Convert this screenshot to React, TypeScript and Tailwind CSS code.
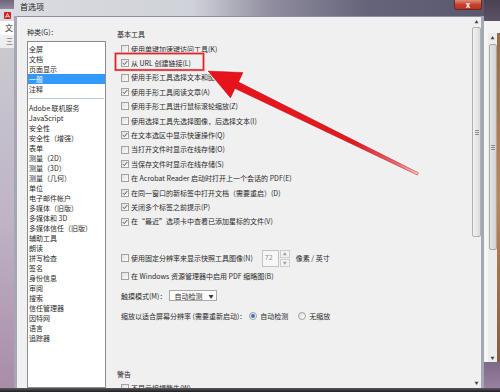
import React from "react";

interface RowProps {
  on?: boolean;
  label: string;
  className?: string;
}

const topCategories = ["全屏", "文档", "页面显示", "一般", "注释"];

const moreCategories = [
  "Adobe 联机服务",
  "JavaScript",
  "安全性",
  "安全性（增强）",
  "表单",
  "测量（2D）",
  "测量（3D）",
  "测量（几何）",
  "单位",
  "电子邮件帐户",
  "多媒体（旧版）",
  "多媒体和 3D",
  "多媒体信任（旧版）",
  "辅助工具",
  "朗读",
  "拼写检查",
  "签名",
  "身份信息",
  "审阅",
  "搜索",
  "信任管理器",
  "因特网",
  "语言",
  "追踪器",
];

const basicTools = [
  { label: "使用单键加速键访问工具(K)", on: false },
  { label: "从 URL 创建链接(L)", on: true },
  { label: "使用手形工具选择文本和图像(X)", on: false },
  { label: "使用手形工具阅读文章(A)", on: true },
  { label: "使用手形工具进行鼠标滚轮缩放(Z)", on: false },
  { label: "使用选择工具先选择图像，后选择文本(I)", on: false },
  { label: "在文本选区中显示快速操作(Q)", on: true },
  { label: "当打开文件时显示在线存储(O)", on: false },
  { label: "当保存文件时显示在线存储(S)", on: true },
  { label: "在 Acrobat Reader 启动时打开上一个会话的 PDF(E)", on: false },
  { label: "在同一窗口的新标签中打开文档（需要重启）(D)", on: true },
  { label: "关闭多个标签之前提示(P)", on: true },
  { label: "在“最近”选项卡中查看已添加星标的文件(V)", on: true },
];

const Check = ({ on }: { on?: boolean }) => (
  <span className="flex h-[8px] w-[8px] shrink-0 items-center justify-center border border-[#a2a2a2] bg-gradient-to-br from-[#e0e0e0] to-[#fbfbfb]">
    {on && (
      <svg viewBox="0 0 6 6" className="h-[6px] w-[6px]">
        <path d="M0.8 3.1 L2.3 4.6 L5.3 1" fill="none" stroke="#444" strokeWidth="0.9" />
      </svg>
    )}
  </span>
);

const CheckRow = ({ on, label, className = "" }: RowProps) => (
  <div className={`flex h-[14.42px] shrink-0 items-center gap-[2px] pl-[15px] ${className}`}>
    <Check on={on} />
    <span className="whitespace-nowrap">{label}</span>
  </div>
);

const Radio = ({ on }: { on?: boolean }) => (
  <span className="flex h-[8px] w-[8px] shrink-0 items-center justify-center rounded-full border border-[#a0a0a0] bg-gradient-to-br from-[#dcdcdc] to-white">
    {on && <span className="h-[4px] w-[4px] rounded-full bg-[#3a78c4]" />}
  </span>
);

const LeftStrip = () => (
  <div className="flex w-[14px] shrink-0 flex-col">
    <div className="h-[9px] bg-gradient-to-b from-[#6f6479] to-[#948aa0]" />
    <div className="flex h-[12px] items-center bg-[#d8dbe3] pl-[4px]">
      <svg viewBox="0 0 8 8" className="h-[7px] w-[7px]">
        <rect width="8" height="8" rx="1" fill="#d4201f" />
        <path d="M1.5 6.5 C3 4 4 2.5 4 1.5 C4 2.5 5 4 6.5 6.5 M2 5 L6 5" fill="none" stroke="#fff" strokeWidth="0.8" />
      </svg>
    </div>
    <div className="flex h-[14px] items-center overflow-hidden bg-white pl-[5px] text-[8px] text-[#333]">文</div>
    <div className="flex h-[13px] items-center justify-end bg-[#eeeeee] pr-[1px] text-[7px] text-[#555]">三</div>
    <div className="flex-1 bg-gradient-to-b from-[#cbc8cf] via-[#bfb4c6] to-[#a98ca9]" />
  </div>
);

const RightStrip = () => (
  <div className="flex w-[16px] shrink-0 flex-col">
    <div className="h-[21px] bg-gradient-to-b from-[#4a4152] to-[#5c5266]" />
    <div className="h-[12px] bg-[#f3f3f3]" />
    <div className="flex h-[329px]">
      <div className="w-[4px] bg-[#f6f6f6]" />
      <div className="flex w-[9px] flex-col items-center bg-[#ececec]">
        <div className="flex h-[9px] items-center text-[4px] leading-none text-[#444]">▲</div>
        <div className="mt-[2px] flex h-[206px] w-[8px] items-center justify-center rounded-[2px] border border-[#a8a8a8] bg-gradient-to-r from-[#e4e4e4] to-[#d2d2d2]">
          <div className="flex flex-col gap-[1px]">
            <span className="h-px w-[4px] bg-[#8a8a8a]" />
            <span className="h-px w-[4px] bg-[#8a8a8a]" />
            <span className="h-px w-[4px] bg-[#8a8a8a]" />
          </div>
        </div>
        <div className="flex-1" />
        <div className="flex h-[9px] items-center text-[4px] leading-none text-[#444]">▼</div>
      </div>
      <div className="w-[3px] bg-gradient-to-b from-[#9b6a3f] via-[#c08850] to-[#8a5a3a]" />
    </div>
    <div className="flex-1 bg-gradient-to-b from-[#7b6a86] to-[#9a7fa3]" />
  </div>
);

const CategoryList = () => (
  <div className="flex w-[89px] shrink-0 flex-col pl-[10px]">
    <div className="flex h-[13px] shrink-0 items-center whitespace-nowrap">种类(G)：</div>
    <div className="mt-[2px] flex flex-1 flex-col border border-[#8a8d95] bg-white pt-[2px]">
      {topCategories.map((c) => (
        <div
          key={c}
          className={`flex h-[10px] shrink-0 items-center whitespace-nowrap pl-[1px] ${c === "一般" ? "bg-[#3399ff] text-white" : ""}`}
        >
          {c}
        </div>
      ))}
      <div className="flex h-[9px] shrink-0 items-center px-[1px]">
        <div className="h-px w-full bg-[#b8c8d8]" />
      </div>
      {moreCategories.map((c) => (
        <div key={c} className="flex h-[10px] shrink-0 items-center whitespace-nowrap pl-[1px]">
          {c}
        </div>
      ))}
    </div>
  </div>
);

const SettingsPanel = () => (
  <div className="flex min-w-0 flex-1 flex-col overflow-hidden">
    <div className="flex h-[15.6px] shrink-0 items-center pl-[11px]">基本工具</div>
    {basicTools.map((t) => (
      <CheckRow key={t.label} on={t.on} label={t.label} />
    ))}
    <div className="h-[22px] shrink-0" />
    <div className="flex h-[14.42px] shrink-0 items-center pl-[15px]">
      <Check />
      <span className="ml-[2px] whitespace-nowrap">使用固定分辨率来显示快照工具图像(N)</span>
      <div className="ml-[9px] flex h-[17px] w-[17px] items-start border border-[#c2c2c2] bg-[#f7f7f7] pl-[2px] pt-[1px] text-[#909090]">
        72
      </div>
      <div className="ml-[1px] flex h-[17px] w-[10px] flex-col gap-px">
        <div className="flex flex-1 items-center justify-center border border-[#cccccc] bg-[#f4f4f4] text-[4px] leading-none text-[#a0a0a0]">▲</div>
        <div className="flex flex-1 items-center justify-center border border-[#cccccc] bg-[#f4f4f4] text-[4px] leading-none text-[#a0a0a0]">▼</div>
      </div>
      <span className="ml-[6px] whitespace-nowrap">像素 / 英寸</span>
    </div>
    <CheckRow className="mt-[3.4px]" label="在 Windows 资源管理器中启用 PDF 缩略图(B)" />
    <div className="mt-[5.6px] flex h-[14.42px] shrink-0 items-center pl-[15px]">
      <span className="whitespace-nowrap">触摸模式(M)：</span>
      <div className="ml-[3px] flex h-[11px] w-[48px] items-center justify-between border border-[#a9a9a9] bg-white pl-[4px] pr-[3px]">
        <span className="whitespace-nowrap">自动检测</span>
        <span className="text-[5px] leading-none text-[#333]">▼</span>
      </div>
    </div>
    <div className="mt-[5.6px] flex h-[14.42px] shrink-0 items-center pl-[15px]">
      <span className="whitespace-nowrap">缩放以适合屏幕分辨率 (需要重新启动)：</span>
      <span className="ml-[3px]">
        <Radio on />
      </span>
      <span className="ml-[3px] whitespace-nowrap">自动检测</span>
      <span className="ml-[10px]">
        <Radio />
      </span>
      <span className="ml-[3px] whitespace-nowrap">无缩放</span>
    </div>
    <div className="mt-[43.6px] flex h-[14.42px] shrink-0 items-center pl-[11px]">警告</div>
    <CheckRow label="不显示编辑警告(W)" />
  </div>
);

const Scrollbar = () => (
  <div className="flex w-[9px] shrink-0 flex-col items-center">
    <div className="flex h-[10px] items-center text-[4px] leading-none text-[#444]">▲</div>
    <div className="flex h-[210px] w-[9px] items-center justify-center rounded-[2px] border border-[#b0b0b0] bg-gradient-to-r from-[#f2f2f2] to-[#dcdcdc]">
      <div className="flex flex-col gap-[1px]">
        <span className="h-px w-[4px] bg-[#8f8f8f]" />
        <span className="h-px w-[4px] bg-[#8f8f8f]" />
        <span className="h-px w-[4px] bg-[#8f8f8f]" />
      </div>
    </div>
    <div className="flex-1" />
    <div className="flex h-[10px] items-center text-[4px] leading-none text-[#444]">▼</div>
  </div>
);

const Annotations = () => (
  <svg className="pointer-events-none absolute left-0 top-0" width="500" height="392" viewBox="0 0 500 392">
    <defs>
      <linearGradient id="arrowFill" gradientUnits="userSpaceOnUse" x1="208" y1="71" x2="418" y2="174">
        <stop offset="0" stopColor="#e8121b" />
        <stop offset="0.7" stopColor="#e11a22" />
        <stop offset="0.9" stopColor="#e86a6e" />
        <stop offset="1" stopColor="#f1caca" />
      </linearGradient>
    </defs>
    <rect x="115.5" y="53.5" width="88" height="16.5" fill="none" stroke="#f6d0d0" strokeWidth="3" />
    <rect x="115.5" y="53.5" width="88" height="16.5" fill="none" stroke="#d8262b" strokeWidth="1.6" />
    <polygon
      points="208,71 243,72.5 238.6,82 418.5,172.8 417.5,175.2 235,88.6 230.5,98"
      fill="none"
      stroke="#ffffff"
      strokeOpacity="0.85"
      strokeWidth="2.4"
      strokeLinejoin="round"
    />
    <polygon
      points="208,71 243,72.5 238.6,82 418.5,172.8 417.5,175.2 235,88.6 230.5,98"
      fill="url(#arrowFill)"
      stroke="#b80d14"
      strokeWidth="0.5"
      strokeLinejoin="round"
    />
  </svg>
);

export default function App() {
  return (
    <div className="relative flex h-[392px] w-[500px] flex-col overflow-hidden bg-[#7a6a86] font-['Liberation_Sans_Narrow','Noto_Sans_CJK_SC',sans-serif] text-[7px] text-[#2a2a2a]">
      <div className="flex h-[388px]">
        <LeftStrip />
        <div className="flex w-[470px] shrink-0 flex-col">
          <div className="relative flex h-[16px] shrink-0 items-center bg-[linear-gradient(90deg,#d9dbe1_0%,#d0d2d9_38%,#8e8c9d_55%,#66647a_75%,#5a586e_100%)] pl-[6px] text-[8px] text-[#1a1a1a]">
            <span className="-mt-[3px]">首选项</span>
            <div className="absolute right-[2px] top-0 flex h-[10px] w-[28px] items-center justify-center rounded-b-[3px] border border-t-0 border-[#6e2a22] bg-gradient-to-b from-[#e08a78] via-[#c9412c] to-[#b83321] text-[8px] font-bold leading-none text-white">
              x
            </div>
          </div>
          <div className="flex min-h-0 flex-1 border-x-[3px] border-[#a5a7b4]">
            <div className="flex min-w-0 flex-1 border-t border-[#8d8f9b] bg-[#f0f0f0] pt-[9px]">
              <CategoryList />
              <SettingsPanel />
              <div className="-mt-[9px] flex">
                <Scrollbar />
              </div>
            </div>
          </div>
        </div>
        <RightStrip />
      </div>
      <div className="h-[4px] bg-gradient-to-b from-[#5a5a5e] to-[#202024]" />
      <Annotations />
    </div>
  );
}
